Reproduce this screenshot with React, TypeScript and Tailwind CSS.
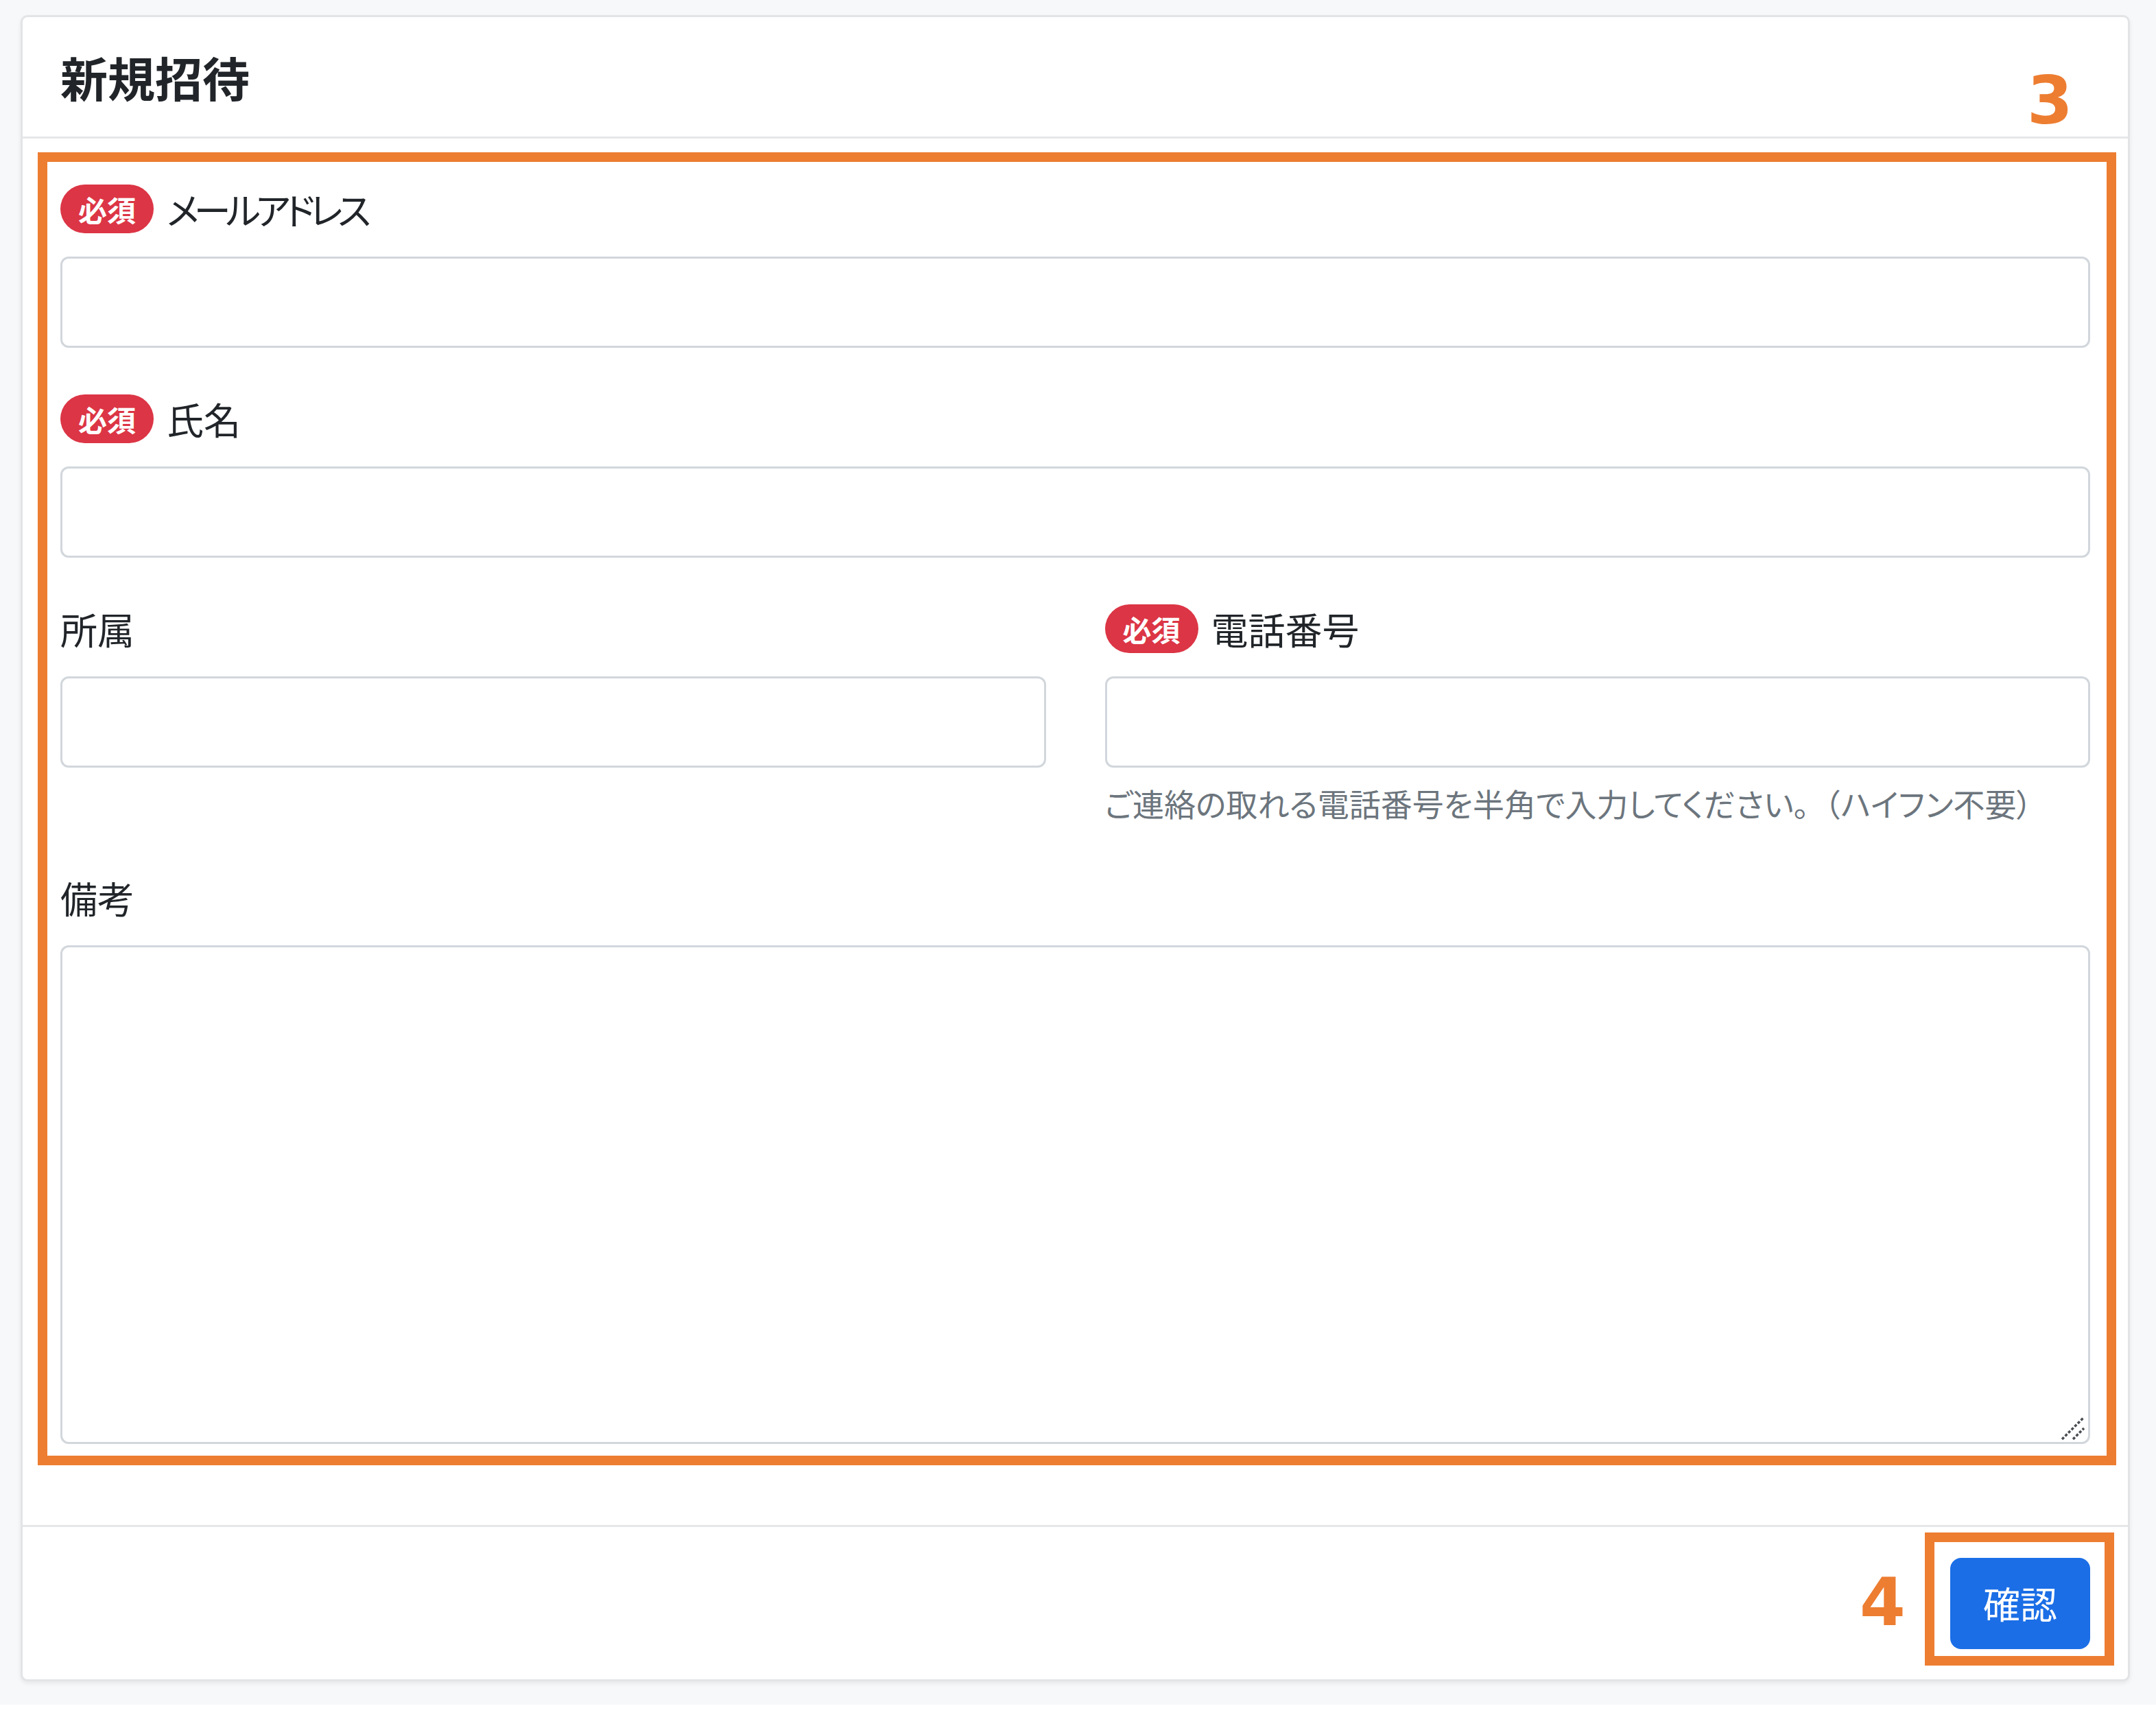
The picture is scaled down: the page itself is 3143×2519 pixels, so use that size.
import type { ReactNode } from "react";

const jp = "font-['Noto_Sans_CJK_JP','Noto_Sans',sans-serif] [font-feature-settings:'palt']";

function RequiredBadge() {
  return (
    <span className="mr-[19px] flex h-[71px] w-[136px] shrink-0 items-center justify-center rounded-full bg-[#dc3545] text-[42px] font-bold leading-none text-white">
      必須
    </span>
  );
}

function FieldLabel({
  required,
  tight,
  children,
}: {
  required?: boolean;
  tight?: boolean;
  children: ReactNode;
}) {
  return (
    <div className="mb-[34px] flex h-[71px] items-center">
      {required && <RequiredBadge />}
      <span
        className={
          tight
            ? "text-[54px] leading-none tracking-[-7px] text-[#212529]"
            : "text-[54px] leading-none text-[#212529]"
        }
      >
        {children}
      </span>
    </div>
  );
}

function TextInput() {
  return (
    <input
      type="text"
      className="block h-[133px] w-full rounded-[12px] border-[3px] border-[#d2d7dc] bg-white px-[30px] text-[50px] outline-none"
    />
  );
}

function ResizeGrip() {
  return (
    <svg
      className="pointer-events-none absolute right-[4px] bottom-[4px]"
      width="40"
      height="40"
      viewBox="0 0 40 40"
    >
      <g stroke="#4a4d52" strokeWidth="3.5" strokeDasharray="4 2.5">
        <line x1="3" y1="37" x2="35" y2="5" />
        <line x1="19" y1="37" x2="35" y2="21" />
      </g>
    </svg>
  );
}

export default function App() {
  return (
    <div className={`relative h-[2485px] bg-[#f7f8fa] pt-[22px] pr-[38px] pl-[30px] ${jp}`}>
      <div className="overflow-hidden rounded-[10px] border-[3px] border-[#e3e4e6] bg-white shadow-[0_3px_6px_rgba(0,0,0,0.07)]">
        <div className="flex h-[177px] items-center border-b-[3px] border-[#e6e7e9] px-[55px]">
          <h1 className="text-[69px] font-bold leading-none text-[#212529]">新規招待</h1>
        </div>

        <form className="px-[55px] pt-[67px] pb-[118px]">
          <div className="mb-[68px]">
            <FieldLabel required tight>
              メールアドレス
            </FieldLabel>
            <TextInput />
          </div>

          <div className="mb-[68px]">
            <FieldLabel required>氏名</FieldLabel>
            <TextInput />
          </div>

          <div className="mb-[68px] grid grid-cols-2 gap-x-[86px]">
            <div>
              <FieldLabel>所属</FieldLabel>
              <TextInput />
            </div>
            <div>
              <FieldLabel required>電話番号</FieldLabel>
              <TextInput />
              <p className="mt-[17px] text-[46px] leading-[69px] text-[#6c757d]">
                ご連絡の取れる電話番号を半角で入力してください
                <span className="[font-feature-settings:normal]">。（</span>
                ハイフン不要）
              </p>
            </div>
          </div>

          <div>
            <FieldLabel>備考</FieldLabel>
            <div className="relative">
              <textarea className="block h-[727px] w-full resize-none rounded-[12px] border-[3px] border-[#d2d7dc] bg-white p-[30px] text-[50px] outline-none" />
              <ResizeGrip />
            </div>
          </div>
        </form>

        <div className="flex h-[225px] items-center justify-end border-t-[3px] border-[#e6e7e9] px-[55px]">
          <button
            type="button"
            className="h-[133px] w-[204px] rounded-[16px] bg-[#1b6ee6] text-[54px] leading-none text-white"
          >
            確認
          </button>
        </div>
      </div>

      {/* annotation overlays */}
      <div className="pointer-events-none absolute top-[222px] left-[55px] h-[1914px] w-[3030px] border-[14px] border-[#ed7d31]" />
      <span className="absolute top-[99px] left-[2955px] font-['DejaVu_Sans',sans-serif] text-[96px] leading-none font-bold text-[#ed7d31]">
        3
      </span>
      <div className="pointer-events-none absolute top-[2234px] left-[2806px] h-[194px] w-[276px] border-[14px] border-[#ed7d31]" />
      <span className="absolute top-[2288px] left-[2711px] font-['DejaVu_Sans',sans-serif] text-[96px] leading-none font-bold text-[#ed7d31]">
        4
      </span>
    </div>
  );
}
